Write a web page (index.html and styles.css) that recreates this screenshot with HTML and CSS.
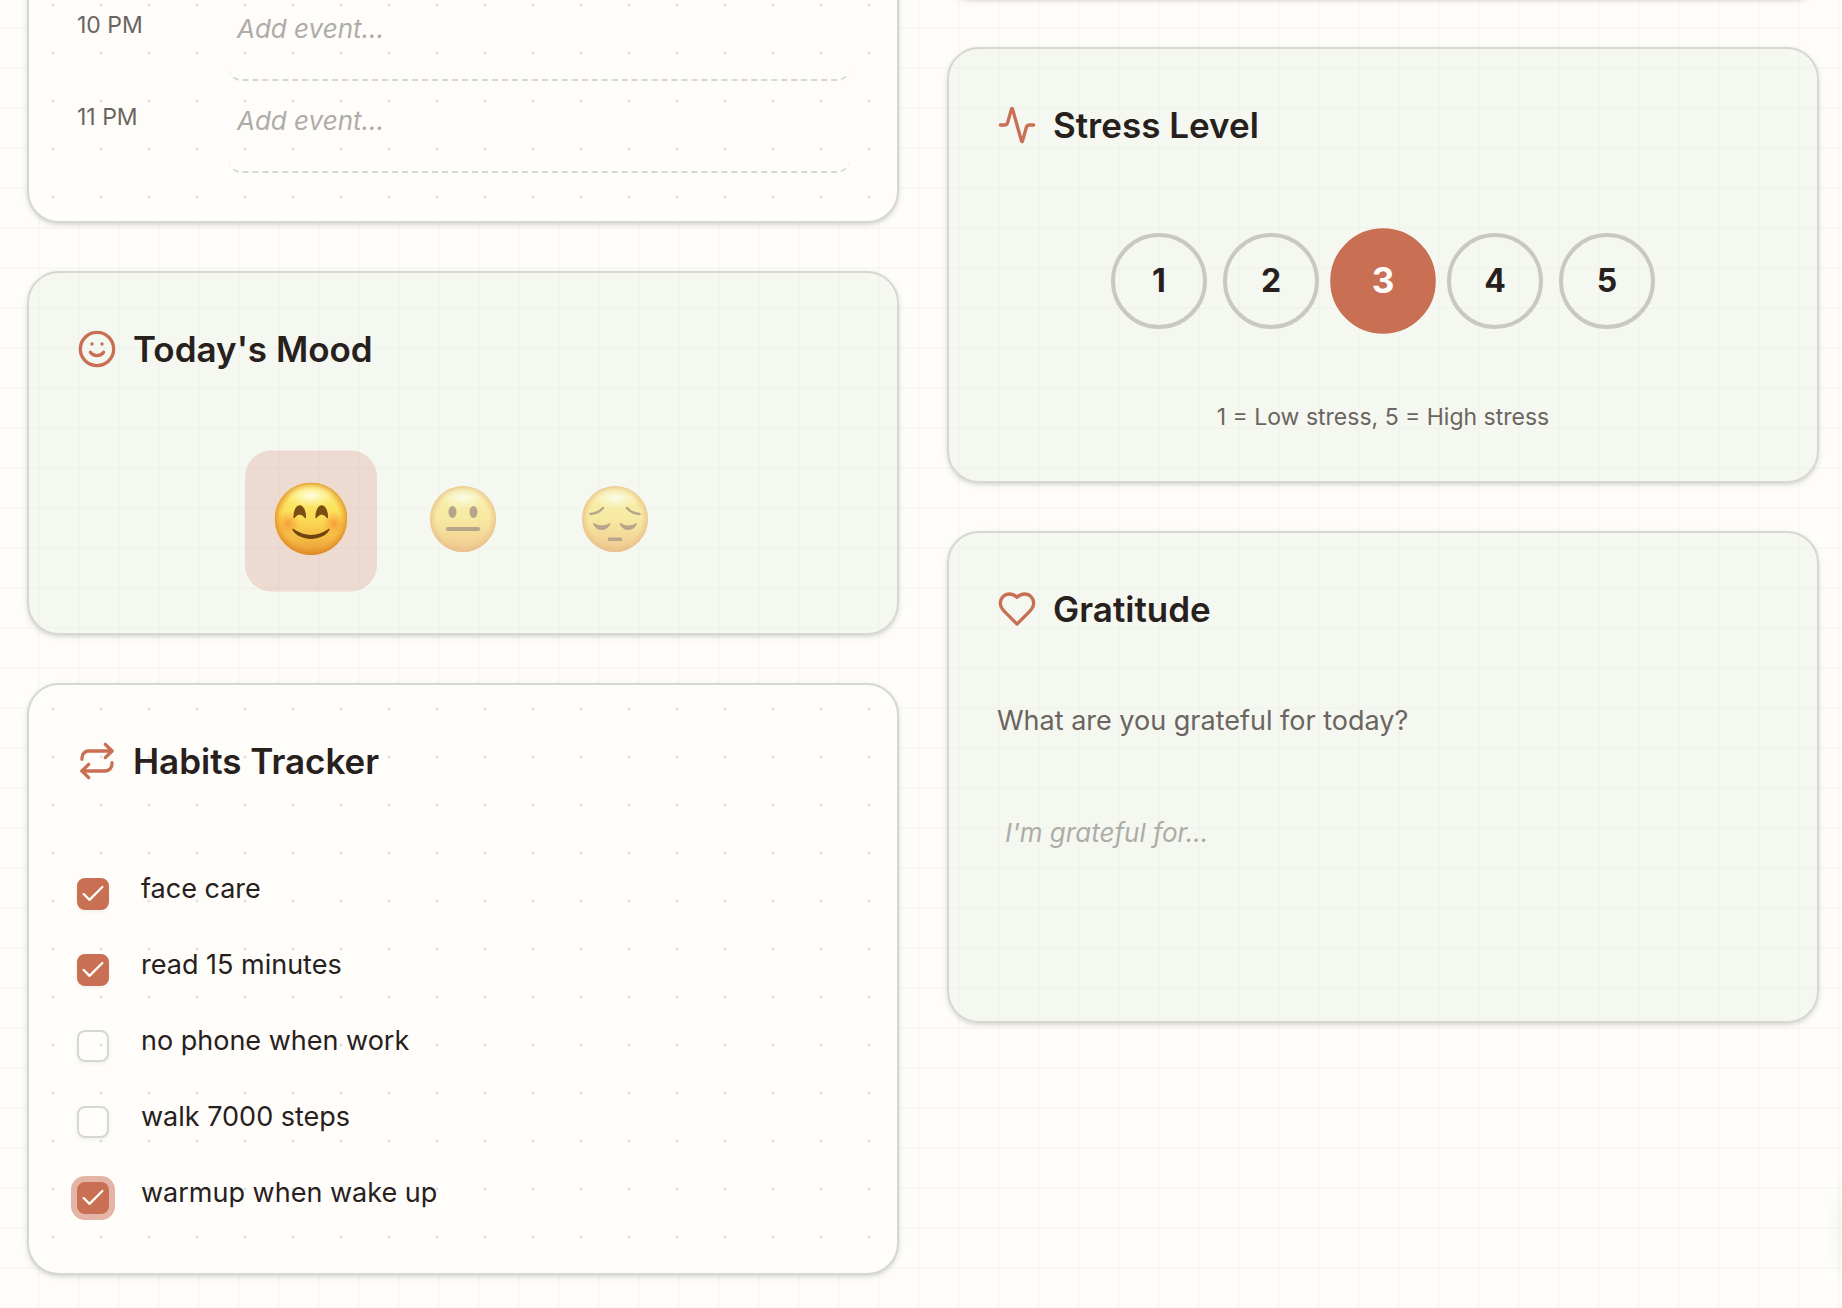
FILE: index.html
```html
<!DOCTYPE html>
<html lang="en">
<head>
    <meta charset="UTF-8">
    <meta name="viewport" content="width=device-width, initial-scale=1.0">
    <title>Daily Planner</title>
    <link rel="stylesheet" href="styles.css">
</head>
<body>
    <main class="board">
        <div class="column">
            <section class="card dotted schedule">
                <div class="hour">
                    <label for="h22">10 PM</label>
                    <textarea id="h22" placeholder="Add event..."></textarea>
                </div>
                <div class="hour">
                    <label for="h23">11 PM</label>
                    <textarea id="h23" placeholder="Add event..."></textarea>
                </div>
            </section>

            <section class="card sage">
                <h2>
                    <svg class="icon" viewBox="0 0 24 24"><circle cx="12" cy="12" r="10"/><path d="M8 14s1.5 2 4 2 4-2 4-2"/><path d="M9 9h.01"/><path d="M15 9h.01"/></svg>
                    Today's Mood
                </h2>
                <div class="moods">
                    <button class="mood selected" aria-label="Happy">
                        <svg viewBox="0 0 66 66">
                            <defs>
                                <linearGradient id="face" x1="0" y1="0" x2="0" y2="1">
                                    <stop offset="0" stop-color="#fdf07a"/>
                                    <stop offset=".5" stop-color="#fbdc55"/>
                                    <stop offset=".8" stop-color="#f4b642"/>
                                    <stop offset="1" stop-color="#e3963a"/>
                                </linearGradient>
                                <radialGradient id="rim">
                                    <stop offset=".78" stop-color="#f09a20" stop-opacity="0"/>
                                    <stop offset="1" stop-color="#d98224" stop-opacity=".75"/>
                                </radialGradient>
                                <radialGradient id="shine">
                                    <stop offset="0" stop-color="#fffff0" stop-opacity=".95"/>
                                    <stop offset="1" stop-color="#fffbb0" stop-opacity="0"/>
                                </radialGradient>
                                <radialGradient id="blush">
                                    <stop offset="0" stop-color="#f5702a" stop-opacity=".55"/>
                                    <stop offset="1" stop-color="#f5802a" stop-opacity="0"/>
                                </radialGradient>
                            </defs>
                            <circle cx="33" cy="33" r="33" fill="url(#face)"/>
                            <circle cx="33" cy="33" r="33" fill="url(#rim)"/>
                            <ellipse cx="33" cy="12" rx="23" ry="11" fill="url(#shine)"/>
                            <circle cx="12" cy="37" r="11" fill="url(#blush)"/>
                            <circle cx="54" cy="37" r="11" fill="url(#blush)"/>
                            <path d="M17.500 32C17.500 17.500 28 17.500 28 32Q22.700 25 17.500 32Z" fill="#7c4d10" stroke="#7c4d10" stroke-linejoin="round"/>
                            <path d="M37.500 32C37.500 17.500 48 17.500 48 32Q42.700 25 37.500 32Z" fill="#7c4d10" stroke="#7c4d10" stroke-linejoin="round"/>
                            <path d="M16.500 42.500Q33 54 49.500 42.500C44 53.500 22 53.500 16.500 42.500Z" fill="#6f430c" stroke="#6f430c" stroke-linejoin="round"/>
                        </svg>
                    </button>
                    <button class="mood" aria-label="Neutral">
                        <svg viewBox="0 0 66 66">
                            <circle cx="33" cy="33" r="33" fill="url(#face)"/>
                            <circle cx="33" cy="33" r="33" fill="url(#rim)"/>
                            <ellipse cx="33" cy="12" rx="23" ry="11" fill="url(#shine)"/>
                            <ellipse cx="22.500" cy="26" rx="4" ry="6" fill="#7a5428"/>
                            <ellipse cx="43.500" cy="26" rx="4" ry="6" fill="#7a5428"/>
                            <rect x="16" y="41" width="34" height="4" rx="2" fill="#7a5428"/>
                        </svg>
                    </button>
                    <button class="mood" aria-label="Sad">
                        <svg viewBox="0 0 66 66">
                            <circle cx="33" cy="33" r="33" fill="url(#face)"/>
                            <circle cx="33" cy="33" r="33" fill="url(#rim)"/>
                            <ellipse cx="33" cy="12" rx="23" ry="11" fill="url(#shine)"/>
                            <g fill="none" stroke="#7a5428" stroke-width="2.500" stroke-linecap="round">
                                <path d="M8.500 28Q16.500 27.500 21 22"/>
                                <path d="M57.500 28Q49.500 27.500 45 22"/>
                            </g>
                            <g fill="#7a5428" stroke="#7a5428" stroke-linejoin="round">
                                <path d="M11.500 37.500Q20 42.500 28 37.500C25.500 45.500 14 45.500 11.500 37.500Z"/>
                                <path d="M38 37.500Q46.500 42.500 54.500 37.500C52 45.500 40.500 45.500 38 37.500Z"/>
                                <rect x="26.500" y="52" width="13" height="2.500"/>
                            </g>
                        </svg>
                    </button>
                </div>
            </section>

            <section class="card dotted">
                <h2>
                    <svg class="icon" viewBox="0 0 24 24"><path d="m17 2 4 4-4 4"/><path d="M3 11v-1a4 4 0 0 1 4-4h14"/><path d="m7 22-4-4 4-4"/><path d="M21 13v1a4 4 0 0 1-4 4H3"/></svg>
                    Habits Tracker
                </h2>
                <div class="habits">
                    <label class="habit"><input type="checkbox" checked> face care</label>
                    <label class="habit"><input type="checkbox" checked> read 15 minutes</label>
                    <label class="habit"><input type="checkbox"> no phone when work</label>
                    <label class="habit"><input type="checkbox"> walk 7000 steps</label>
                    <label class="habit"><input type="checkbox" class="active" checked> warmup when wake up</label>
                </div>
            </section>
        </div>

        <div class="column">
            <div class="card spacer"></div>

            <section class="card sage">
                <h2>
                    <svg class="icon" viewBox="0 0 24 24"><path d="M22 12h-2.480a2 2 0 0 0-1.930 1.460l-2.350 8.360a.25.25 0 0 1-.48 0L9.240 2.180a.25.25 0 0 0-.48 0l-2.350 8.360A2 2 0 0 1 4.490 12H2"/></svg>
                    Stress Level
                </h2>
                <div class="levels">
                    <button class="level">1</button>
                    <button class="level">2</button>
                    <button class="level selected">3</button>
                    <button class="level">4</button>
                    <button class="level">5</button>
                </div>
                <p class="hint">1 = Low stress, 5 = High stress</p>
            </section>

            <section class="card sage">
                <h2>
                    <svg class="icon" viewBox="0 0 24 24"><path d="M19 14c1.490-1.460 3-3.210 3-5.500A5.500 5.500 0 0 0 16.500 3c-1.760 0-3 .5-4.500 2-1.500-1.500-2.740-2-4.500-2A5.500 5.500 0 0 0 2 8.500c0 2.300 1.500 4.050 3 5.500l7 7Z"/></svg>
                    Gratitude
                </h2>
                <div class="gratitude">
                    <label for="grateful">What are you grateful for today?</label>
                    <textarea id="grateful" placeholder="I'm grateful for..."></textarea>
                </div>
            </section>
        </div>
    </main>

    <script>
        // one choice at a time in the mood and stress rows
        document.querySelectorAll('.mood, .level').forEach(function (btn) {
            btn.addEventListener('click', function () {
                btn.parentElement.querySelector('.selected').classList.remove('selected');
                btn.classList.add('selected');
            });
        });
    </script>
</body>
</html>
```
FILE: styles.css
```css
* {
    box-sizing: border-box;
}
body {
    margin: 0;
    min-height: 100vh;
    overflow-x: hidden;
    font-family: Inter, "Liberation Sans", sans-serif;
    font-size: 27px;
    line-height: 40px;
    color: #27201d;
    background-color: #fefdf9;
    background-image:
        radial-gradient(16px 56px at 100% 94%, rgba(90, 130, 100, 0.05), transparent),
        linear-gradient(rgba(60, 60, 50, 0.025) 2px, transparent 2px),
        linear-gradient(90deg, rgba(60, 60, 50, 0.025) 2px, transparent 2px);
    background-size: auto, 40px 40px, 40px 40px;
    background-position: 0 0, 0 27px, 38px 0;
}
button, input, textarea {
    font: inherit;
    color: inherit;
}
.board {
    display: grid;
    grid-template-columns: 1fr 1fr;
    gap: 48px;
    margin-top: -49px;
    padding: 0 23px 0 27px;
}
.column {
    display: flex;
    flex-direction: column;
    gap: 48px;
}
.card {
    padding: 48px;
    border: 2px solid #d7d7d2;
    border-radius: 32px;
    box-shadow: 0 2px 6px rgba(0, 0, 0, 0.1), 0 2px 3px rgba(0, 0, 0, 0.06);
}
.spacer {
    height: 48px;
    padding: 0;
}
.sage {
    background-color: rgba(230, 240, 229, 0.42);
}
.dotted {
    background-color: #fefdf9;
    background-image: radial-gradient(circle, #e3e2de 1px, transparent 2px);
    background-size: 48px 48px;
}
h2 {
    display: flex;
    align-items: center;
    gap: 16px;
    margin: 0;
    font-size: 35px;
    font-weight: 600;
    line-height: 56px;
}
.icon {
    width: 40px;
    height: 40px;
    fill: none;
    stroke: #c96f53;
    stroke-width: 2;
    stroke-linecap: round;
    stroke-linejoin: round;
}
textarea {
    display: block;
    flex: 1;
    padding: 8px;
    border: 0;
    border-radius: 12px;
    outline: none;
    resize: none;
    background: transparent;
    font-size: 26px;
}
textarea::placeholder {
    color: #aeaca7;
    font-style: italic;
}

/* schedule */
.schedule {
    display: flex;
    flex-direction: column;
    gap: 12px;
    background-position: 0 28px;
}
.hour {
    display: flex;
    height: 80px;
}
.hour label {
    width: 152px;
    padding-top: 8px;
    font-size: 23px;
    line-height: 32px;
    color: #6b6460;
}
.hour textarea {
    border-bottom: 2px dashed #d7d7d2;
}

/* mood */
.moods {
    display: flex;
    justify-content: center;
    gap: 32px;
    margin-top: 80px;
}
.mood {
    width: 120px;
    height: 128px;
    padding: 0 0 4px;
    border: 0;
    border-radius: 24px;
    background: transparent;
    cursor: pointer;
}
.mood svg {
    display: block;
    width: 66px;
    height: 66px;
    margin: 0 auto;
    opacity: 0.5;
}
.mood.selected {
    background: rgba(212, 100, 80, 0.2);
    transform: scale(1.1);
}
.mood.selected svg {
    opacity: 1;
}

/* habits */
.habits {
    display: flex;
    flex-direction: column;
    gap: 24px;
    margin-top: 80px;
}
.habit {
    display: flex;
    gap: 32px;
    height: 52px;
}
.habit input {
    appearance: none;
    width: 32px;
    height: 32px;
    margin: 9px 0 0;
    border: 2px solid #d7d7d2;
    border-radius: 8px;
    box-shadow: 0 2px 4px rgba(0, 0, 0, 0.05);
}
.habit input:checked {
    border-color: #c96f53;
    background: #c96f53 url("data:image/svg+xml,%3Csvg xmlns='http://www.w3.org/2000/svg' viewBox='0 0 24 24' fill='none' stroke='%23fefdf9' stroke-width='2' stroke-linecap='round' stroke-linejoin='round'%3E%3Cpath d='M20 6 9 17l-5-5'/%3E%3C/svg%3E") center / 28px no-repeat;
}
.habit .active {
    box-shadow: 0 0 0 6px #e4b5a7;
}

/* stress */
.levels {
    display: flex;
    justify-content: center;
    gap: 16px;
    margin-top: 80px;
}
.level {
    width: 96px;
    height: 96px;
    padding: 0;
    border: 4px solid #c9c9c4;
    border-radius: 50%;
    font-size: 32px;
    font-weight: 700;
    background: transparent;
    cursor: pointer;
}
.level.selected {
    border-color: #c96f53;
    background: #c96f53;
    color: #fefdf9;
    transform: scale(1.1);
}
.hint {
    margin: 72px 0 0;
    font-size: 23px;
    line-height: 32px;
    text-align: center;
    color: #6b6460;
}

/* gratitude */
.gratitude {
    display: flex;
    flex-direction: column;
    gap: 64px;
    margin-top: 64px;
}
.gratitude label {
    color: #6b6460;
}
.gratitude textarea {
    flex: none;
    height: 168px;
}
```
